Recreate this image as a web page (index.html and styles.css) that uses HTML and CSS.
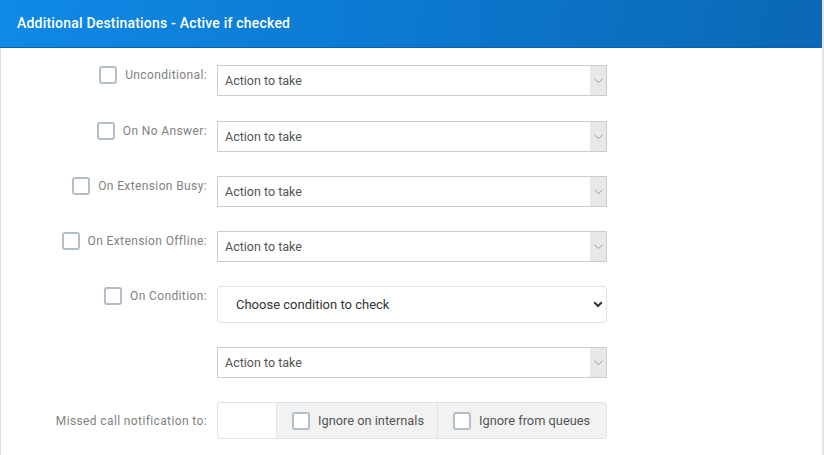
FILE: index.html
```html
<!DOCTYPE html>
<html lang="en">
<head>
<meta charset="UTF-8">
<meta name="viewport" content="width=device-width, initial-scale=1.0">
<title>Additional Destinations</title>
<link rel="stylesheet" href="styles.css">
</head>
<body>
<div class="panel">
    <div class="panel-heading">Additional Destinations - Active if checked</div>
    <div class="panel-body">
        <div class="form-row">
            <label class="row-label"><span class="check"></span>Unconditional:</label>
            <div class="select">
                <span class="select-text">Action to take</span>
                <span class="select-arrow"><svg width="9" height="6" viewBox="0 0 9 6"><path d="M0.5 0.8 L4.5 4.6 L8.5 0.8" fill="none" stroke="#999" stroke-width="1"/></svg></span>
            </div>
        </div>
        <div class="form-row">
            <label class="row-label"><span class="check"></span>On No Answer:</label>
            <div class="select">
                <span class="select-text">Action to take</span>
                <span class="select-arrow"><svg width="9" height="6" viewBox="0 0 9 6"><path d="M0.5 0.8 L4.5 4.6 L8.5 0.8" fill="none" stroke="#999" stroke-width="1"/></svg></span>
            </div>
        </div>
        <div class="form-row">
            <label class="row-label"><span class="check"></span>On Extension Busy:</label>
            <div class="select">
                <span class="select-text">Action to take</span>
                <span class="select-arrow"><svg width="9" height="6" viewBox="0 0 9 6"><path d="M0.5 0.8 L4.5 4.6 L8.5 0.8" fill="none" stroke="#999" stroke-width="1"/></svg></span>
            </div>
        </div>
        <div class="form-row">
            <label class="row-label"><span class="check"></span>On Extension Offline:</label>
            <div class="select">
                <span class="select-text">Action to take</span>
                <span class="select-arrow"><svg width="9" height="6" viewBox="0 0 9 6"><path d="M0.5 0.8 L4.5 4.6 L8.5 0.8" fill="none" stroke="#999" stroke-width="1"/></svg></span>
            </div>
        </div>
        <div class="form-row">
            <label class="row-label"><span class="check"></span>On Condition:</label>
            <div class="select-native">
                <span class="native-text">Choose condition to check</span>
                <svg width="10" height="7" viewBox="0 0 10 7"><path d="M1.2 1.2 L5 5 L8.8 1.2" fill="none" stroke="#333" stroke-width="2"/></svg>
            </div>
        </div>
        <div class="form-row">
            <div class="row-label"></div>
            <div class="select">
                <span class="select-text">Action to take</span>
                <span class="select-arrow"><svg width="9" height="6" viewBox="0 0 9 6"><path d="M0.5 0.8 L4.5 4.6 L8.5 0.8" fill="none" stroke="#999" stroke-width="1"/></svg></span>
            </div>
        </div>
        <div class="form-row row-center">
            <label class="row-label">Missed call notification to:</label>
            <div class="input-group">
                <div class="short-input"></div>
                <div class="addon"><span class="check"></span>Ignore on internals</div>
                <div class="addon"><span class="check"></span>Ignore from queues</div>
            </div>
        </div>
    </div>
</div>
</body>
</html>
```

FILE: styles.css
```css
body {
    font-family: Roboto, "Liberation Sans", Arial, sans-serif;
    background-color: #fff;
    margin: 0;
    padding: 0;
}

.panel {
    width: 822px;
    height: 455px;
    border-right: 2px solid #e4e4e4;
    overflow: hidden;
}

.panel-heading {
    height: 47px;
    line-height: 47px;
    padding-left: 17px;
    color: #fff;
    font-size: 14px;
    font-weight: 500;
    letter-spacing: 0.2px;
    background: linear-gradient(100deg, #0f8ae6 0%, #0c78d0 50%, #0b68b4 100%);
    border-bottom: 1px solid #0a62ac;
}

.panel-body {
    border-left: 1px solid #dcdcdc;
    padding-top: 17px;
    height: 100%;
}

.form-row {
    display: flex;
    align-items: flex-start;
    margin-bottom: 24px;
}

.form-row:first-child {
    margin-bottom: 25px;
}

.row-label {
    width: 206px;
    height: 20px;
    display: flex;
    align-items: center;
    justify-content: flex-end;
    font-size: 12px;
    color: #828282;
    letter-spacing: 0.38px;
    margin-right: 10px;
    flex-shrink: 0;
}

.row-center {
    align-items: center;
}

.check {
    display: inline-block;
    width: 14px;
    height: 14px;
    border: 2px solid #b3bec8;
    border-radius: 3px;
    background-color: #fff;
    margin-right: 8px;
    flex-shrink: 0;
}

.select {
    width: 388px;
    height: 29px;
    border: 1px solid #ccc;
    display: flex;
    align-items: center;
    background-color: #fff;
}

.select-text {
    flex: 1;
    padding-left: 7px;
    font-size: 12.5px;
    color: #555;
}

.select-arrow {
    width: 16px;
    height: 100%;
    background-color: #e8e8e8;
    display: flex;
    align-items: center;
    justify-content: center;
}

.select-native {
    width: 388px;
    height: 35px;
    border: 1px solid #e2e2e2;
    border-radius: 4px;
    display: flex;
    align-items: center;
}

.native-text {
    flex: 1;
    padding-left: 18px;
    font-size: 13px;
    color: #333;
}

.select-native svg {
    margin-right: 3px;
}

.input-group {
    width: 390px;
    height: 37px;
    display: flex;
}

.short-input {
    width: 58px;
    border: 1px solid #e2e2e2;
    border-right: none;
    border-radius: 4px 0 0 4px;
    background-color: #fff;
}

.addon {
    display: flex;
    align-items: center;
    padding: 0 13px 0 15px;
    font-size: 12.8px;
    color: #555;
    white-space: nowrap;
    background-color: #f2f2f2;
    border: 1px solid #e2e2e2;
}

.addon + .addon {
    border-left: none;
    flex: 1;
    border-radius: 0 4px 4px 0;
}
```
